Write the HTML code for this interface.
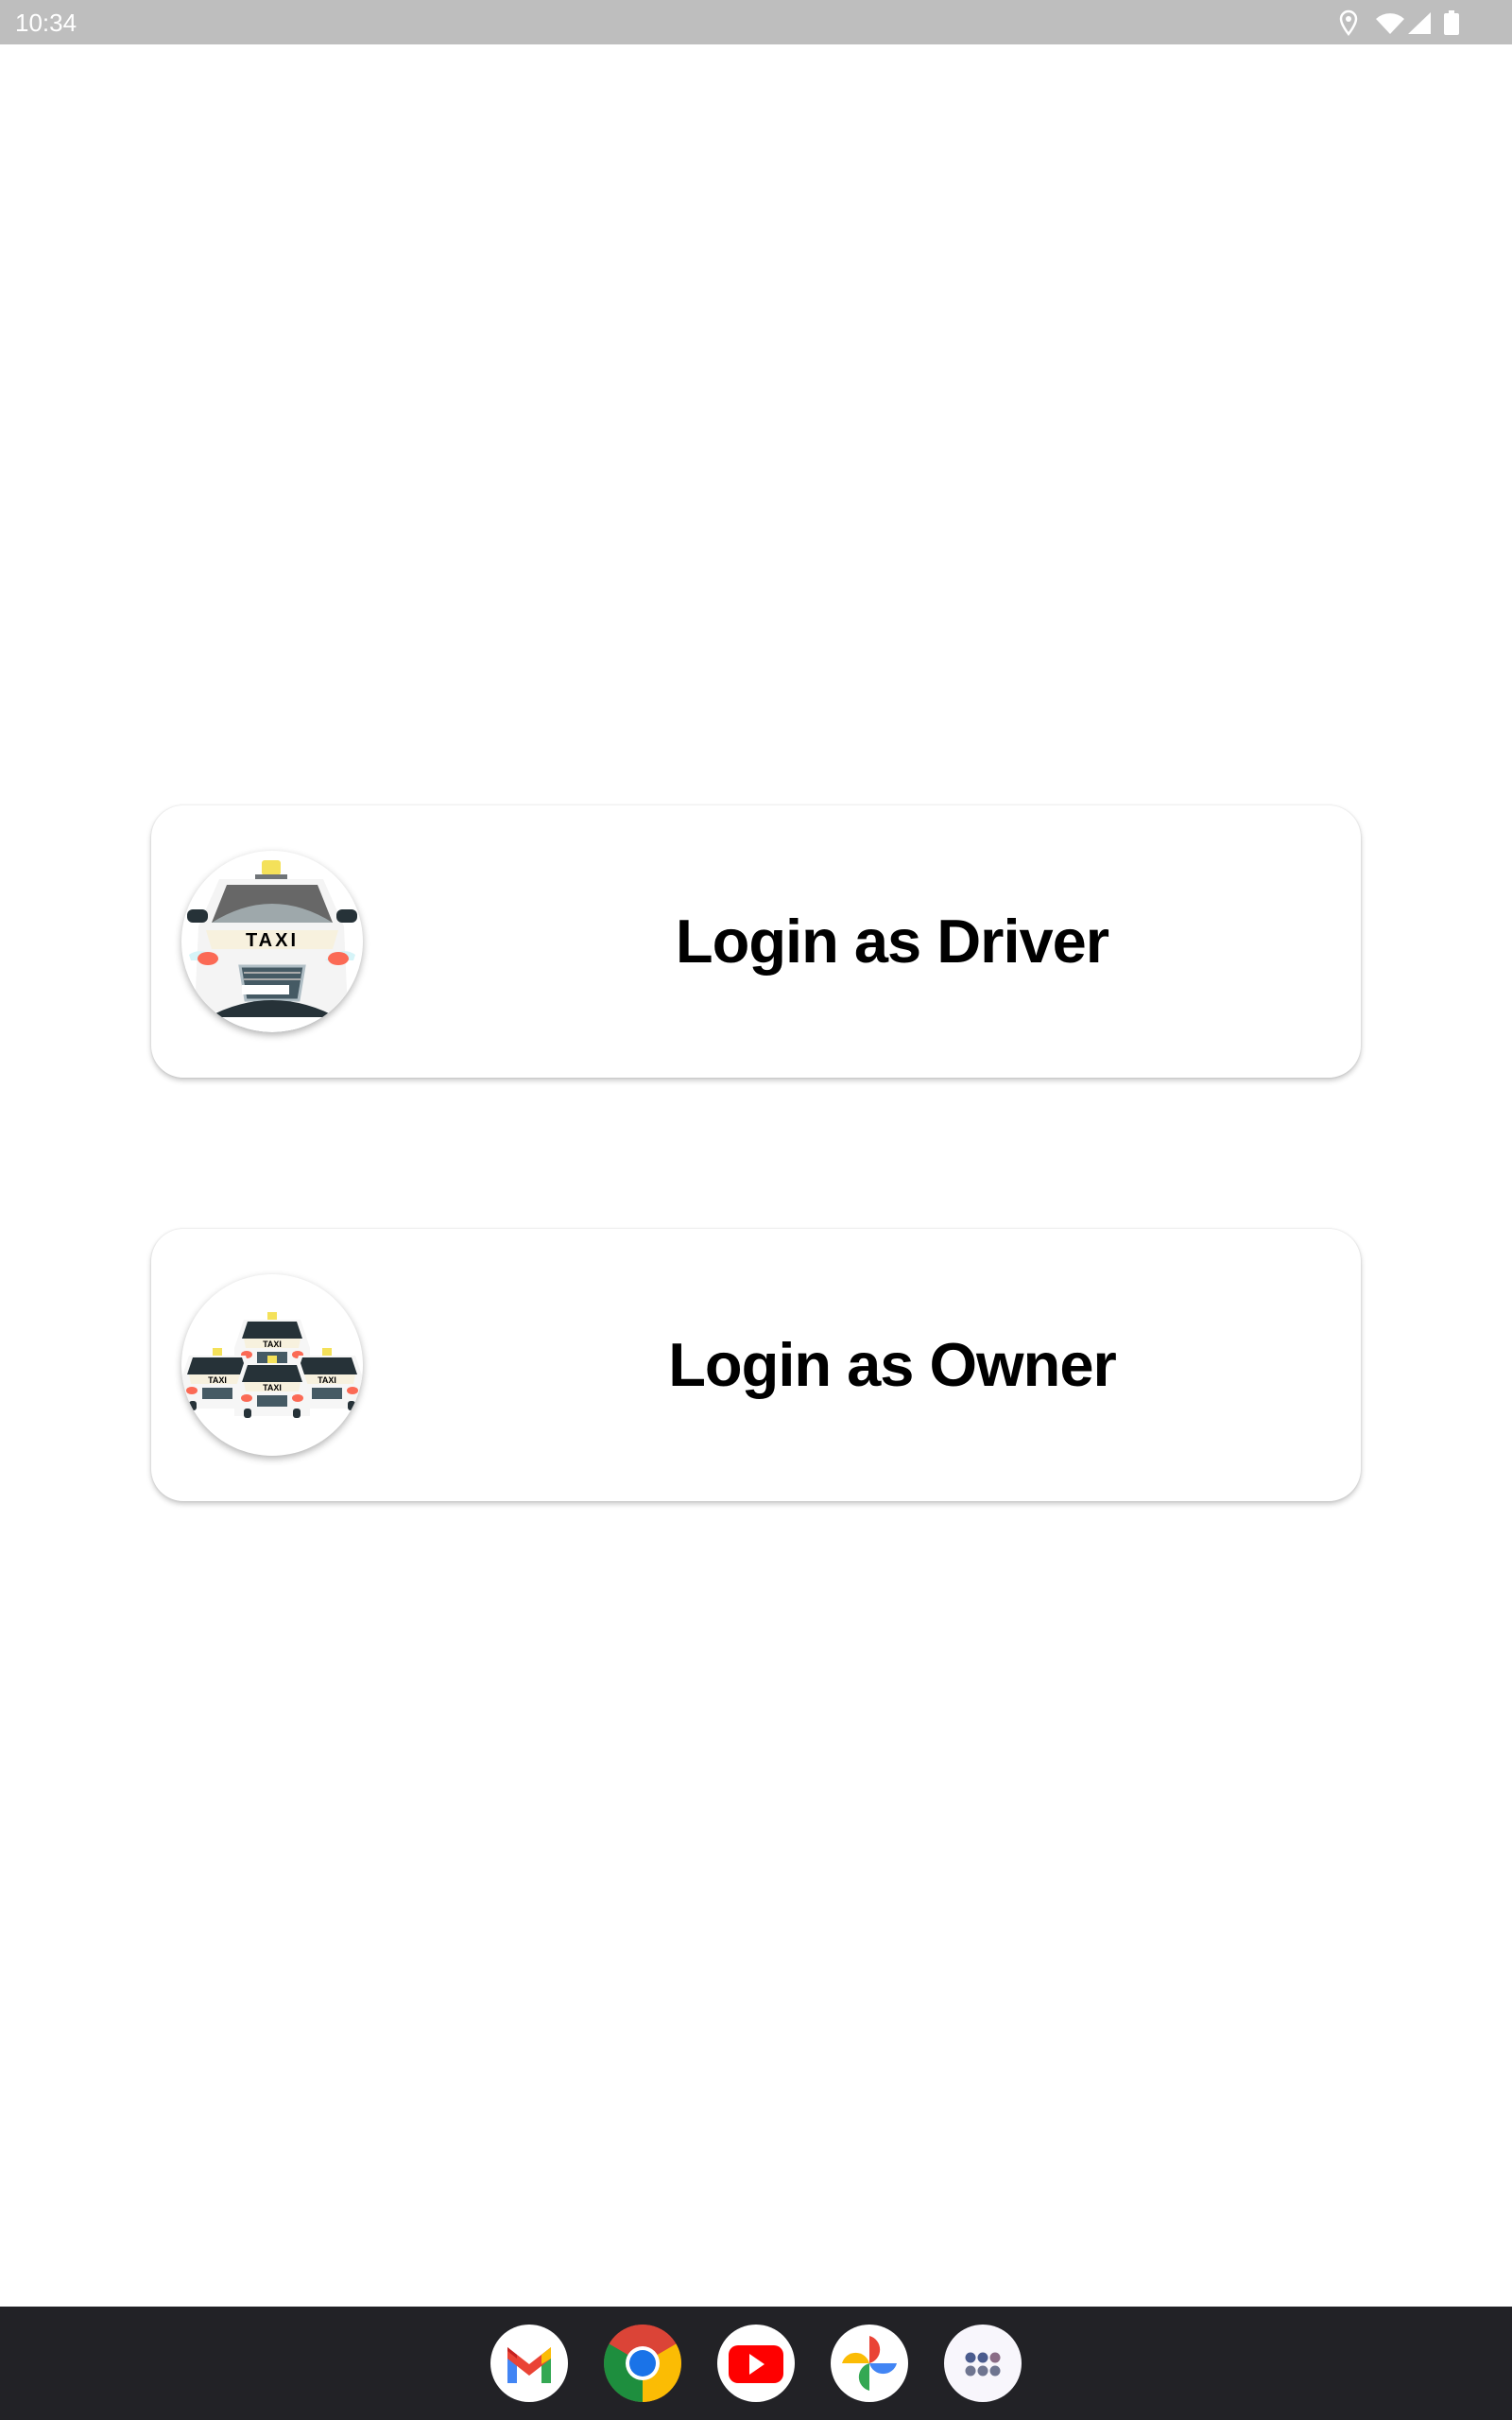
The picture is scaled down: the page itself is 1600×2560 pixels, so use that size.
<!DOCTYPE html>
<html><head><meta charset="utf-8"><style>
*{margin:0;padding:0;box-sizing:border-box}
body{width:1600px;height:2560px;background:#fff;position:relative;overflow:hidden;font-family:"Liberation Sans",sans-serif}
.sb{position:absolute;left:0;top:0;width:1600px;height:47px;background:#bebebe}
.time{position:absolute;left:16px;top:9px;color:#fff;font-size:26px}
.card{position:absolute;left:160px;width:1280px;height:288px;border-radius:34px;background:#fff;box-shadow:0 3px 6px rgba(0,0,0,.22),0 0 2px rgba(0,0,0,.12)}
.circ{position:absolute;left:32px;top:48px;width:192px;height:192px;border-radius:50%;background:#fff;box-shadow:0 3px 8px rgba(0,0,0,.3);overflow:hidden}
.lbl{position:absolute;left:479px;width:610px;top:0;height:288px;line-height:288px;text-align:center;font-weight:bold;font-size:65px;color:#000;letter-spacing:-1px}
.nav{position:absolute;left:0;top:2440px;width:1600px;height:120px;background:#222226}
.ic{position:absolute;top:19px;width:82px;height:82px;border-radius:50%;background:#fff;overflow:hidden}
</style></head><body>
<div class="sb"><div class="time">10:34</div>
<svg style="position:absolute;left:1410px;top:8px" width="150" height="32" viewBox="0 0 150 32">
<path d="M17 4a8 8 0 0 0-8 8c0 6 8 16 8 16s8-10 8-16a8 8 0 0 0-8-8z" fill="none" stroke="#fff" stroke-width="2.5"/><circle cx="17" cy="12" r="3" fill="#fff"/>
<path d="M46 12a22 22 0 0 1 30 0L61 28z" fill="#fff"/>
<path d="M104 5L104 28L80 28z" fill="#fff"/>
<rect x="118" y="6" width="16" height="23" rx="2" fill="#fff"/><rect x="123" y="3" width="6" height="4" fill="#fff"/>
</svg></div>

<div class="card" style="top:852px">
<div class="circ"><svg width="192" height="192" viewBox="0 0 192 192">
<rect x="85" y="10" width="20" height="16" rx="3" fill="#f4e15a"/><rect x="78" y="25" width="34" height="5" fill="#6f7478"/>
<path d="M40 30h110l22 50 4 90H14l4-90z" fill="#f4f4f4"/>
<path d="M48 36h96l16 40H32z" fill="#676767"/>
<path d="M32 76q64-40 128 0z" fill="#9ea8ab"/>
<rect x="6" y="62" width="22" height="14" rx="6" fill="#263238"/><rect x="164" y="62" width="22" height="14" rx="6" fill="#263238"/>
<path d="M26 84h140l-6 20H32z" fill="#f7f1de"/>
<text x="96" y="101" font-family="Liberation Sans,sans-serif" font-size="20" font-weight="bold" text-anchor="middle" letter-spacing="3">TAXI</text>
<path d="M8 110q14-10 32 6H10z" fill="#d6f4f8"/><ellipse cx="28" cy="114" rx="11" ry="7" fill="#fb6a55"/>
<path d="M184 110q-14-10-32 6h30z" fill="#d6f4f8"/><ellipse cx="166" cy="114" rx="11" ry="7" fill="#fb6a55"/>
<path d="M62 122h68l-6 36H68z" fill="#455a64" stroke="#b0bec5" stroke-width="3"/>
<rect x="66" y="128" width="60" height="2" fill="#aaa"/><rect x="66" y="135" width="60" height="2" fill="#aaa"/>
<rect x="64" y="142" width="50" height="10" fill="#fff"/>
<path d="M24 178q72-40 144 0v14H24z" fill="#263238"/><rect x="34" y="176" width="124" height="20" fill="#fff"/>
</svg></div>
<div class="lbl">Login as Driver</div></div>

<div class="card" style="top:1300px">
<div class="circ"><svg width="192" height="192" viewBox="0 0 192 192">
<defs><g id="c"><rect x="-5" y="0" width="10" height="8" fill="#f4e15a"/><path d="M-30 8h60l10 30v26h-80V38z" fill="#f6f6f6"/><path d="M-26 10h52l6 18h-64z" fill="#263238"/><path d="M-30 28h60l-2 10h-56z" fill="#f7f1de"/><ellipse cx="-27" cy="45" rx="6" ry="4" fill="#fb6a55"/><ellipse cx="27" cy="45" rx="6" ry="4" fill="#fb6a55"/><rect x="-16" y="42" width="32" height="12" fill="#455a64"/><rect x="-30" y="56" width="8" height="10" rx="3" fill="#263238"/><rect x="22" y="56" width="8" height="10" rx="3" fill="#263238"/></g></defs>
<use href="#c" x="96" y="40"/>
<use href="#c" x="38" y="78"/>
<use href="#c" x="154" y="78"/>
<use href="#c" x="96" y="86"/>
<text x="96" y="77" font-family="Liberation Sans,sans-serif" font-size="9" font-weight="bold" text-anchor="middle">TAXI</text>
<text x="38" y="115" font-family="Liberation Sans,sans-serif" font-size="9" font-weight="bold" text-anchor="middle">TAXI</text>
<text x="154" y="115" font-family="Liberation Sans,sans-serif" font-size="9" font-weight="bold" text-anchor="middle">TAXI</text>
<text x="96" y="123" font-family="Liberation Sans,sans-serif" font-size="9" font-weight="bold" text-anchor="middle">TAXI</text>
</svg></div>
<div class="lbl">Login as Owner</div></div>

<div class="nav">
<div class="ic" style="left:519px"><svg width="82" height="82" viewBox="0 0 82 82"><path d="M18 24v38h10V38z" fill="#4285f4"/><path d="M54 38v24h10V24z" fill="#34a853"/><path d="M18 24l23 18 23-18v12L41 54 18 36z" fill="#ea4335"/><path d="M18 24l10 8v4l-10-8z" fill="#c5221f"/><path d="M54 32l10-8v12l-10 6z" fill="#fbbc04"/></svg></div>
<div class="ic" style="left:639px;background:none"><svg width="82" height="82" viewBox="0 0 82 82"><circle cx="41" cy="41" r="41" fill="#db4437"/><path d="M41 41L5 20A41 41 0 0 0 41 82z" fill="#1e8e3e"/><path d="M41 41L77 20A41 41 0 0 1 41 82z" fill="#fbbc04"/><path d="M41 41L5 20A41 41 0 0 1 77 20z" fill="#db4437"/><circle cx="41" cy="41" r="18" fill="#fff"/><circle cx="41" cy="41" r="14" fill="#1a73e8"/></svg></div>
<div class="ic" style="left:759px"><svg width="82" height="82" viewBox="0 0 82 82"><rect x="12" y="22" width="58" height="40" rx="10" fill="#f00"/><path d="M34 31l16 11-16 11z" fill="#fff"/></svg></div>
<div class="ic" style="left:879px"><svg width="82" height="82" viewBox="0 0 82 82"><path d="M41 41V12a15 15 0 0 1 0 29z" fill="#ea4335"/><path d="M41 41h29a15 15 0 0 1-29 0z" fill="#4285f4"/><path d="M41 41v29a15 15 0 0 1 0-29z" fill="#34a853"/><path d="M41 41H12a15 15 0 0 1 29 0z" fill="#fbbc04"/></svg></div>
<div class="ic" style="left:999px;background:#f8f6fc"><svg width="82" height="82" viewBox="0 0 82 82"><g fill="#4b5c8e"><circle cx="28" cy="35" r="5.5"/><circle cx="41" cy="35" r="5.5"/></g><circle cx="54" cy="35" r="5.5" fill="#8a6c86"/><g fill="#6f7590"><circle cx="28" cy="49" r="5.5"/><circle cx="41" cy="49" r="5.5"/><circle cx="54" cy="49" r="5.5"/></g></svg></div>
</div>
</body></html>
